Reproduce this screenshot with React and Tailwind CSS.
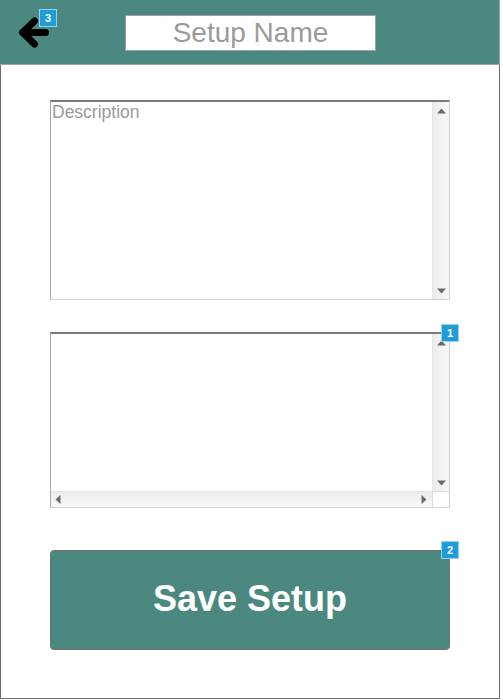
import React from "react";

const Badge = ({ n, className }) => (
  <div
    className={
      "absolute w-[18px] h-[18px] bg-[#1e9dd8] border border-[#93d3f0] flex items-center justify-center text-white text-[11px] font-bold leading-none " +
      className
    }
    style={{ fontFamily: '"Liberation Sans", Arial, sans-serif' }}
  >
    {n}
  </div>
);

const Up = () => (
  <svg width="9" height="6" viewBox="0 0 9 6">
    <polygon points="4.5,0.5 9,5.5 0,5.5" fill="#6a6a6a" />
  </svg>
);
const Down = () => (
  <svg width="9" height="6" viewBox="0 0 9 6">
    <polygon points="0,0.5 9,0.5 4.5,5.5" fill="#6a6a6a" />
  </svg>
);
const Left = () => (
  <svg width="6" height="9" viewBox="0 0 6 9">
    <polygon points="0.5,4.5 5.5,0 5.5,9" fill="#6a6a6a" />
  </svg>
);
const Right = () => (
  <svg width="6" height="9" viewBox="0 0 6 9">
    <polygon points="0.5,0 5.5,4.5 0.5,9" fill="#6a6a6a" />
  </svg>
);

export default function App() {
  const font = { fontFamily: '"Liberation Sans", Arial, sans-serif' };
  return (
    <div className="w-[500px] bg-white" style={font}>
      {/* header */}
      <div className="relative h-[65px] bg-[#4a8880] border-b border-r border-[#a3a3a3] flex items-start">
        <svg
          className="ml-[18px] mt-[16px]"
          width="32"
          height="33"
          viewBox="0 0 32 33"
        >
          <path
            d="M27.5 16.5 H5 M16.5 5 L4.5 16.5 L16.5 28"
            stroke="#000"
            strokeWidth="7"
            strokeLinecap="round"
            strokeLinejoin="round"
            fill="none"
          />
        </svg>
        <div className="ml-[75px] mt-[15px] w-[251px] h-[36px] bg-white border border-[#a0a0a0] flex items-center justify-center text-[28px] text-[#9a9a9a] leading-none">
          Setup Name
        </div>
        <Badge n="3" className="left-[39px] top-[9px]" />
      </div>

      {/* body */}
      <div className="h-[634px] border-l border-r border-b border-[#6b6b6b] pl-[49px] pt-[35px] flex flex-col">
        {/* description */}
        <div className="w-[400px] h-[200px] border-t-2 border-t-[#7a7a7a] border-l border-l-[#a8a8a8] border-r border-b border-r-[#d2d2d2] border-b-[#d2d2d2] flex">
          <div className="flex-1 pl-[1px] pt-0 text-[17.5px] leading-[20px] text-[#9a9a9a]">
            Description
          </div>
          <div className="w-[17px] border-l border-[#e6e6e6] bg-gradient-to-r from-[#ececec] to-[#f8f8f8] flex flex-col items-center justify-between pt-[6px] pb-[5px]">
            <Up />
            <Down />
          </div>
        </div>

        {/* list box */}
        <div className="relative mt-[32px] w-[400px] h-[176px] border-t-2 border-t-[#7a7a7a] border-l border-l-[#a8a8a8] border-r border-b border-r-[#d2d2d2] border-b-[#d2d2d2] flex flex-col">
          <div className="flex-1 flex">
            <div className="flex-1" />
            <div className="w-[17px] border-l border-[#e6e6e6] bg-gradient-to-r from-[#ececec] to-[#f8f8f8] flex flex-col items-center justify-between pt-[6px] pb-[5px]">
              <Up />
              <Down />
            </div>
          </div>
          <div className="h-[16px] flex">
            <div className="flex-1 border-t border-[#e6e6e6] bg-gradient-to-b from-[#ececec] to-[#f8f8f8] flex items-center justify-between pl-[4px] pr-[5px]">
              <Left />
              <Right />
            </div>
            <div className="w-[17px] bg-white border-l border-t border-[#dcdcdc]" />
          </div>
          <Badge n="1" className="left-[390px] top-[-10px]" />
        </div>

        {/* button */}
        <div className="relative mt-[42px] w-[400px] h-[100px] bg-[#4a8880] border border-[#707070] rounded-[4px] flex items-center justify-center pb-[2px] text-white font-bold text-[36px] leading-none">
          Save Setup
          <Badge n="2" className="left-[390px] top-[-10px]" />
        </div>
      </div>
    </div>
  );
}
